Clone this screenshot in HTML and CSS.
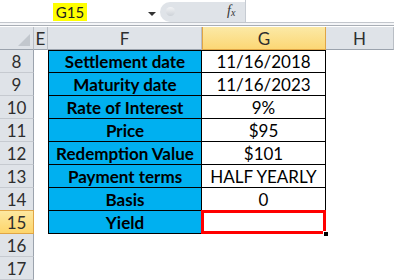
FILE: index.html
```html
<!DOCTYPE html>
<html lang="en">
<head>
    <meta charset="UTF-8">
    <title>Yield sheet</title>
    <link rel="stylesheet" href="styles.css">
</head>
<body>
    <div class="excel">
        <div class="formula-bar">
            <div class="name-box">
                <span class="cell-ref">G15</span>
                <span class="drop-arrow"></span>
            </div>
            <div class="fx-panel">
                <span class="grip"></span>
                <span class="fx">f<sub>x</sub></span>
            </div>
            <div class="formula-input"></div>
        </div>
        <div class="bar-rule"></div>

        <div class="sheet">
            <div class="corner"></div>
            <div class="col-head">E</div>
            <div class="col-head">F</div>
            <div class="col-head active">G</div>
            <div class="col-head">H</div>

            <div class="row-head">8</div>
            <div class="blank"></div>
            <div class="cell label first">Settlement date</div>
            <div class="cell value first">11/16/2018</div>
            <div class="blank"></div>

            <div class="row-head">9</div>
            <div class="blank"></div>
            <div class="cell label">Maturity date</div>
            <div class="cell value">11/16/2023</div>
            <div class="blank"></div>

            <div class="row-head">10</div>
            <div class="blank"></div>
            <div class="cell label">Rate of Interest</div>
            <div class="cell value">9%</div>
            <div class="blank"></div>

            <div class="row-head">11</div>
            <div class="blank"></div>
            <div class="cell label">Price</div>
            <div class="cell value">$95</div>
            <div class="blank"></div>

            <div class="row-head">12</div>
            <div class="blank"></div>
            <div class="cell label">Redemption Value</div>
            <div class="cell value">$101</div>
            <div class="blank"></div>

            <div class="row-head">13</div>
            <div class="blank"></div>
            <div class="cell label">Payment terms</div>
            <div class="cell value">HALF YEARLY</div>
            <div class="blank"></div>

            <div class="row-head">14</div>
            <div class="blank"></div>
            <div class="cell label">Basis</div>
            <div class="cell value">0</div>
            <div class="blank"></div>

            <div class="row-head active">15</div>
            <div class="blank"></div>
            <div class="cell label">Yield</div>
            <div class="cell value selected"></div>
            <div class="blank"></div>

            <div class="row-head">16</div>
            <div class="blank"></div>
            <div class="blank"></div>
            <div class="blank"></div>
            <div class="blank"></div>

            <div class="row-head">17</div>
            <div class="blank"></div>
            <div class="blank"></div>
            <div class="blank"></div>
            <div class="blank"></div>
        </div>
    </div>
</body>
</html>
```

FILE: styles.css
```css
body {
    margin: 0;
    padding: 0;
    background-color: #fff;
    font-family: 'Lato', 'Liberation Sans', sans-serif;
    font-size: 17px;
    color: #000;
}

.excel {
    width: 394px;
    height: 280px;
    overflow: hidden;
}

/* formula bar */

.formula-bar {
    display: flex;
    height: 22px;
    background-color: #fff;
}

.name-box {
    position: relative;
    width: 160px;
}

.cell-ref {
    position: absolute;
    left: 53px;
    top: 3px;
    width: 34px;
    height: 18px;
    line-height: 18px;
    text-align: center;
    background-color: #ffff00;
    color: #222;
    font-size: 15px;
}

.drop-arrow {
    position: absolute;
    left: 148px;
    top: 12px;
    border-left: 4px solid transparent;
    border-right: 4px solid transparent;
    border-top: 4px solid #333;
}

.fx-panel {
    position: relative;
    width: 85px;
    margin-top: 2px;
    background-color: #dfe3e8;
    border-radius: 10px 0 0 10px;
}

.grip {
    position: absolute;
    left: 6px;
    top: 5px;
    width: 9px;
    height: 9px;
    border-radius: 50%;
    background: linear-gradient(#f2f3f5, #cdd2d8);
}

.fx {
    position: absolute;
    left: 67px;
    top: 1px;
    font-family: 'Liberation Serif', serif;
    font-style: italic;
    font-size: 14px;
    color: #333;
}

.fx sub {
    font-size: 10px;
    vertical-align: -1px;
}

.formula-input {
    flex: 1;
    border-left: 1px solid #c6cbd2;
    background-color: #fff;
}

.bar-rule {
    height: 2px;
    border-top: 1px solid #c2c6cc;
    border-bottom: 1px solid #a9aeb5;
    background-color: #f4f5f7;
    margin-bottom: 1px;
}

/* sheet grid */

.sheet {
    display: grid;
    grid-template-columns: 34px 14px 154px 124px 1fr;
    grid-auto-rows: 23px;
    background-color: #dfe3e8;
}

.corner,
.col-head,
.row-head {
    box-sizing: border-box;
    background-color: #dfe3e8;
    color: #2e2e2e;
    text-align: center;
    line-height: 23px;
}

.corner {
    position: relative;
    border-right: 1px solid #b9bec5;
    border-bottom: 1px solid #9ba3ad;
}

.corner::after {
    content: "";
    position: absolute;
    right: 3px;
    bottom: 3px;
    border-left: 12px solid transparent;
    border-bottom: 12px solid #c2c7cd;
}

.col-head {
    border-right: 1px solid #b9bec5;
    border-bottom: 1px solid #9ba3ad;
}

.col-head.active {
    background: linear-gradient(#fbe9a6, #fcd775);
    border-right-color: #e0a545;
    border-left: 1px solid #e0a545;
    border-bottom-color: #e0a545;
}

.row-head {
    border-right: 1px solid #9ba3ad;
    border-bottom: 1px solid #c6cad0;
}

.row-head.active {
    background: linear-gradient(#fde8a0, #fdd56b);
    border-right-color: #e0a545;
    border-bottom-color: #e0a545;
    border-top: 1px solid #e0a545;
    margin-top: -1px;
    height: 24px;
}

.blank {
    background-color: #fff;
}

.cell {
    box-sizing: border-box;
    border-right: 1px solid #000;
    border-bottom: 1px solid #000;
    text-align: center;
    line-height: 23px;
    white-space: nowrap;
}

.cell.first {
    border-top: 1px solid #000;
    line-height: 21px;
}

.label {
    border-left: 1px solid #000;
    background-color: #00b0f0;
    font-weight: bold;
}

.value {
    background-color: #fff;
}

.selected {
    position: relative;
}

.selected::before {
    content: "";
    position: absolute;
    left: -1px;
    top: -1px;
    right: -1px;
    bottom: -1px;
    border: 3px solid #ff0000;
}

.selected::after {
    content: "";
    position: absolute;
    right: -3px;
    bottom: -3px;
    width: 4px;
    height: 4px;
    background-color: #000;
    border: 1px solid #fff;
    border-width: 1px 0 0 1px;
}
```
